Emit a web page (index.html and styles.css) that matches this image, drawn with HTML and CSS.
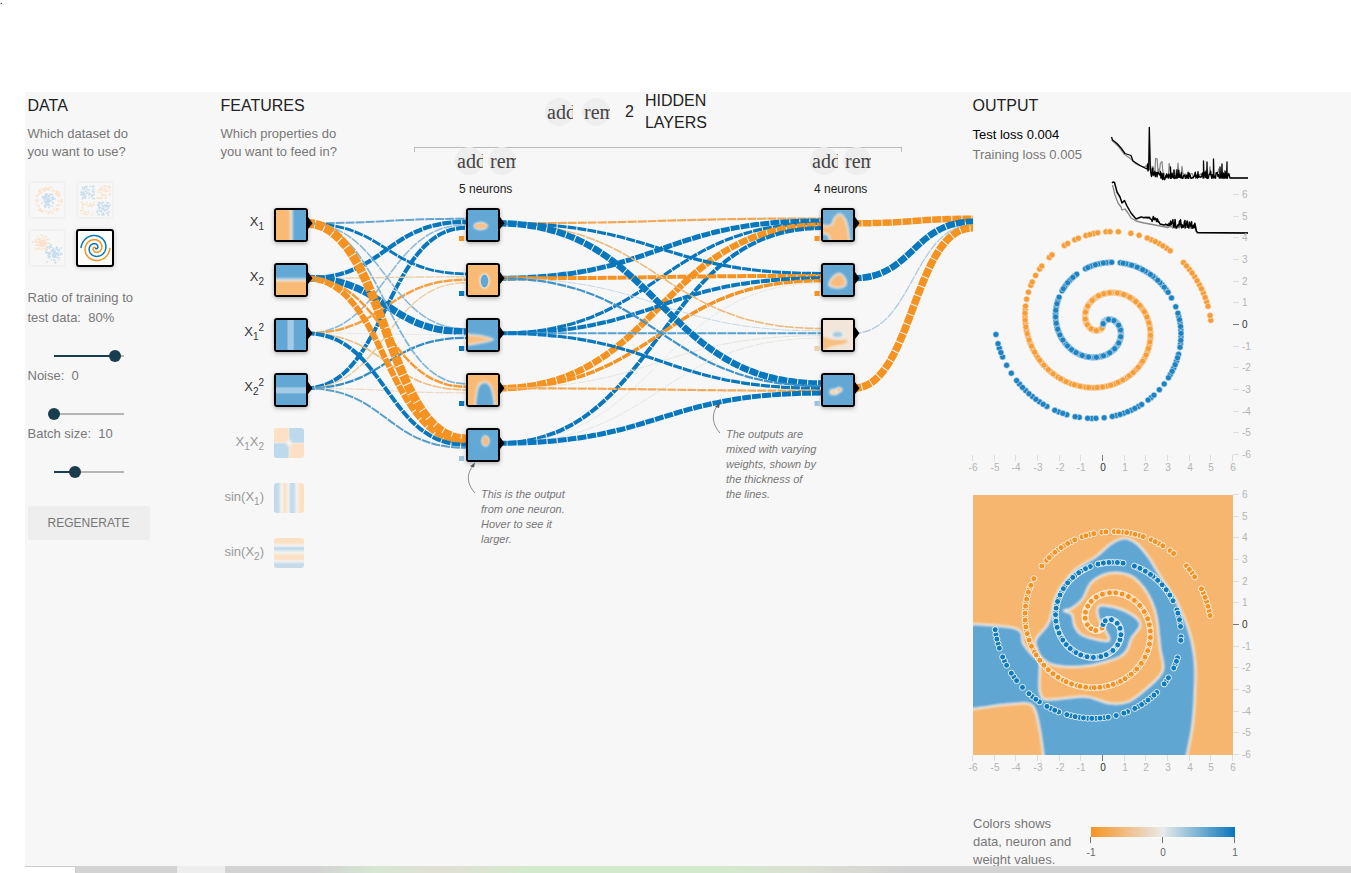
FILE: index.html
```html
<!DOCTYPE html>
<html lang="en">
<head>
<meta charset="utf-8">
<title>Neural Network Playground</title>
<link rel="stylesheet" href="styles.css">
</head>
<body>
<div class="top-space">.</div>
<main class="playground">
  <section class="data">
    <h2>DATA</h2>
    <p class="lead">Which dataset do<br>you want to use?</p>
    <div class="datasets">
      <svg class="dataset" id="set-circle" viewBox="0 0 34 34"></svg>
      <svg class="dataset" id="set-xor" viewBox="0 0 34 34"></svg>
      <svg class="dataset" id="set-gauss" viewBox="0 0 34 34"></svg>
      <svg class="dataset selected" id="set-spiral" viewBox="0 0 34 34"></svg>
    </div>
    <div class="control"><label>Ratio of training to<br>test data:&nbsp; 80%</label>
      <div class="slider"><i class="fill" style="width:61px"></i><i class="knob" style="left:55px"></i></div></div>
    <div class="control"><label>Noise:&nbsp; 0</label>
      <div class="slider"><i class="fill" style="width:0"></i><i class="knob" style="left:-6px"></i></div></div>
    <div class="control"><label>Batch size:&nbsp; 10</label>
      <div class="slider"><i class="fill" style="width:21px"></i><i class="knob" style="left:15px"></i></div></div>
    <button class="regenerate">REGENERATE</button>
  </section>

  <section class="network">
    <div class="features">
      <h2>FEATURES</h2>
      <p class="lead">Which properties do<br>you want to feed in?</p>
    </div>
    <div class="hidden">
      <div class="layers-head">
        <span class="round"><i>add</i></span><span class="round second"><i>remove</i></span>
        <span class="count">2</span><span class="layers-title">HIDDEN<br>LAYERS</span>
      </div>
      <div class="bracket"></div>
    </div>
    <svg class="diagram" id="diagram" viewBox="221 92 752 774"></svg>
    <div class="neurons first">
      <div><span class="round"><i>add</i></span><span class="round"><i>remove</i></span></div>
      <p>5 neurons</p>
    </div>
    <div class="neurons last">
      <div><span class="round"><i>add</i></span><span class="round"><i>remove</i></span></div>
      <p>4 neurons</p>
    </div>
    <p class="callout one">This is the output<br>from one neuron.<br>Hover to see it<br>larger.</p>
    <p class="callout two">The outputs are<br>mixed with varying<br>weights, shown by<br>the thickness of<br>the lines.</p>
  </section>

  <section class="output">
    <div class="stats">
      <div>
        <h2>OUTPUT</h2>
        <p class="loss test">Test loss 0.004</p>
        <p class="loss">Training loss 0.005</p>
      </div>
      <svg class="curves" id="curves" viewBox="1111 120 140 120"></svg>
    </div>
    <svg class="plot" id="plot-points" viewBox="965 185 300 300"></svg>
    <svg class="plot" id="plot-heat" viewBox="965 485 300 300"></svg>
    <div class="legend">
      <p>Colors shows<br>data, neuron and<br>weight values.</p>
      <div class="scale">
        <div class="bar"></div>
        <div class="ticks"><i></i><i></i><i></i></div>
        <div class="nums"><span>-1</span><span>0</span><span>1</span></div>
      </div>
    </div>
  </section>
</main>
<footer class="strip"><i class="tab"></i><i class="a"></i><i class="b"></i><i class="c"></i></footer>
<script src="app.js"></script>
</body>
</html>
```
FILE: styles.css
```css
* { box-sizing: border-box; }
body { margin: 0; width: 1351px; height: 873px; overflow: hidden; background: #fff; font-family: "Liberation Sans", Arial, sans-serif; font-size: 13px; color: #777; }
h2 { margin: 0 0 0 -.5px; font-size: 16px; font-weight: 400; line-height: 22px; color: #222; }
p { margin: 0; }
svg { display: block; }
.top-space { height: 92px; font: 10px/2px "Liberation Serif", serif; color: #000; }
.playground { display: grid; grid-template-columns: 193px 752px 1fr; height: 774px; margin-left: 25px; padding-left: 3px; background: #f7f7f7; overflow: hidden; }
.data, .features { padding-top: 3px; }
.lead { margin: 8px 0 0 -.5px; line-height: 18px; }
.datasets { display: grid; grid-template-columns: 38px 38px; gap: 10px; margin: 20px 0 21px; }
.dataset { width: 38px; height: 38px; border: 2px solid #f1f1f1; border-radius: 3px; }
.dataset.selected { border-color: #000; background: #fff; box-shadow: 0 1px 5px rgba(0,0,0,.2); }
.control label { display: block; margin-left: -.5px; line-height: 20px; }
.control { height: 58px; }
.control:nth-of-type(2) { height: 78px; }
.slider { position: relative; width: 70px; height: 2px; margin: 27px 0 0 26px; background: #b5b5b5; }
.fill { display: block; height: 2px; background: #183d4e; }
.knob { position: absolute; top: -5px; width: 12px; height: 12px; border-radius: 50%; background: #183d4e; }
.regenerate { display: block; width: 122px; height: 34px; margin-top: 24px; padding: 0 1px 0 0; border: 0; border-radius: 2px; background: #eee; font: 12px "Liberation Sans", Arial, sans-serif; color: #777; }
.network { position: relative; display: grid; grid-template-columns: 193px 488px; align-items: start; }
.layers-head { display: flex; height: 55px; padding-left: 131px; }
.round { display: block; flex: none; width: 28px; height: 28px; border-radius: 50%; background: #eee; }
.layers-head .round { margin-top: 6px; }
.layers-head .second { margin-left: 9px; }
.round i { display: block; width: 25.5px; height: 28px; margin-left: 2px; overflow: hidden; font: 20px/28px "Liberation Serif", serif; color: #444; }
.count { margin: 9px 0 0 15px; font-size: 16px; line-height: 22px; color: #222; }
.layers-title { margin: -2px 0 0 11px; font-size: 16px; line-height: 22px; color: #222; }
.bracket { height: 5px; border: 1px solid #bbb; border-bottom: 0; }
.diagram { position: absolute; left: 0; top: 0; width: 752px; height: 774px; }
.neurons { position: absolute; top: 55px; color: #222; font-size: 12px; }
.neurons div { display: flex; gap: 5px; }
.neurons p { margin: 7px 0 0 4px; line-height: 14px; }
.neurons.first { left: 234px; }
.neurons.last { left: 589px; }
.callout { position: absolute; font-size: 11px; font-style: italic; line-height: 15px; }
.callout.one { left: 260px; top: 395px; }
.callout.two { left: 505px; top: 335px; }
.output { display: flex; flex-direction: column; }
.stats { display: flex; height: 93px; padding-top: 3px; }
.stats > div { width: 138px; flex: none; }
.loss { line-height: 20px; margin-left: -.5px; white-space: nowrap; }
.loss.test { margin-top: 8px; color: #000; }
.curves { width: 140px; height: 120px; margin-top: 25px; overflow: visible; }
.plot { width: 300px; height: 300px; margin-left: -8px; flex: none; overflow: visible; }
.legend { display: flex; margin-top: 30px; line-height: 18px; }
.legend p { width: 118px; white-space: nowrap; }
.scale { width: 144px; padding-top: 12px; }
.bar { height: 10px; background: linear-gradient(90deg, #f59322, #e8eaeb, #0877bd); }
.ticks { display: flex; justify-content: space-between; width: 145px; margin-left: -1px; }
.ticks i { width: 1px; height: 6px; background: #777; }
.nums { display: flex; justify-content: space-between; width: 154px; margin-left: -5px; font-size: 10px; line-height: 20px; color: #666; }
.nums span { width: 10px; text-align: center; }
.strip { display: flex; height: 7px; margin-left: 25px; }
.tab { width: 51px; border-top: 1px solid #ccc; border-right: 1px solid #ccc; }
.a { width: 101px; background: #d3d3d3; }
.b { width: 48px; background: #eee; }
.c { flex: 1; background: linear-gradient(90deg, #d3d3d3 0, #d3d3d3 90px, #d6e6d2 150px, #e1dfd5 215px, #d3e9cc 300px, #d3e9cc 500px, #dcdfd4 590px, #d3d3d3 680px, #d3d3d3); }
```
FILE: app.js
```js
const ORANGE = '#f59322', BLUE = '#0877bd';
const HEAT_O = '#f9ba75', HEAT_B = '#63a8d5';
const $ = id => document.getElementById(id);
let seed = 7;
const rnd = () => (seed = (seed * 16807) % 2147483647) / 2147483647;
const put = (id, html) => { $(id).innerHTML += html; };

/* Smooth closed curve through a list of points */
function smooth(pts) {
  const n = pts.length, g = i => pts[(i + n) % n];
  let d = `M${pts[0]}`;
  for (let i = 0; i < n; i++) {
    const [a, b, c, e] = [g(i - 1), g(i), g(i + 1), g(i + 2)];
    d += `C${b[0] + (c[0] - a[0]) / 6},${b[1] + (c[1] - a[1]) / 6} ${c[0] - (e[0] - b[0]) / 6},${c[1] - (e[1] - b[1]) / 6} ${c[0]},${c[1]}`;
  }
  return d + 'Z';
}

/* ---- dataset thumbnails ---- */
function thumbs() {
  const dot = (x, y, c) => `<rect x="${x.toFixed(1)}" y="${y.toFixed(1)}" width="1.4" height="1.4" fill="${c}"/>`;
  const po = '#fbe1c8', pb = '#c5dced';
  let s = '';
  for (let i = 0; i < 90; i++) { const a = rnd() * 6.28, r = 10 + rnd() * 4; s += dot(17.3 + r * Math.cos(a), 17 + r * Math.sin(a), po); }
  for (let i = 0; i < 90; i++) { const a = rnd() * 6.28, r = rnd() * 7.5; s += dot(17.3 + r * Math.cos(a), 17 + r * Math.sin(a), pb); }
  put('set-circle', s); s = '';
  for (let i = 0; i < 240; i++) {
    const x = 2 + rnd() * 30, y = 2 + rnd() * 30;
    if (Math.abs(x - 17) < 1.3 || Math.abs(y - 17) < 1.3) continue;
    s += dot(x, y, (x < 17) === (y < 17) ? pb : po);
  }
  put('set-xor', s); s = '';
  const bell = () => (rnd() + rnd() + rnd() - 1.5) * 7.5;
  for (let i = 0; i < 90; i++) s += dot(11.2 + bell(), 11 + bell(), po) + dot(22 + bell(), 21.5 + bell(), pb);
  put('set-gauss', s);
  const line = sign => {
    let d = '';
    for (let i = 0; i <= 120; i++) { const f = i / 120, t = 11 * f, r = 14.5 * f; d += (i ? 'L' : 'M') + (17.5 + sign * r * Math.sin(t)).toFixed(2) + ',' + (17 + sign * r * Math.cos(t)).toFixed(2); }
    return d;
  };
  put('set-spiral', `<path d="${line(-1)}" fill="none" stroke="${ORANGE}" stroke-width="1.5"/><path d="${line(1)}" fill="none" stroke="${BLUE}" stroke-width="1.5"/>`);
}

/* ---- network diagram ---- */
const ROW = [223, 278, 333, 388, 443, 498, 553];
function link(x1, y1, x2, y2, [c, w]) {
  const m = (x1 + x2) / 2;
  return `<path d="M${x1},${y1}C${m},${y1} ${m},${y2} ${x2},${y2}" fill="none" stroke="${c}" stroke-width="${w}" stroke-dasharray="9 1" stroke-dashoffset=".5"/>`;
}
function layer(x1, x2, rows) {
  let s = '';
  rows.forEach((ins, j) => ins.forEach((v, i) => {
    s += link(x1, ROW[i] + .3, x2, ROW[j] + .3 + (i - (ins.length - 1) / 2) / ins.length * 12, v);
  }));
  return s;
}
const B = w => [BLUE, w], O = w => [ORANGE, w];
const first = [
  [['#66a5cf', 2], B(4.2), ['#8ebad8', 1.6], B(4)],
  [B(2.8), ['#ebcfad', 1.4], ['#f2a347', 2.5], ['#edcca2', 1.4]],
  [['#8bb9d8', 1.6], B(7), ['#e6e8e9', 1], ['#368dc5', 2.3]],
  [['#7eb3d5', 1.7], ['#f39b34', 2.5], ['#efbe83', 1.7], ['#ead9c4', 1.2]],
  [O(9), O(6), B(4), ['#599ecb', 2]]
];
const second = [
  [['#f2a856', 2.2], B(5), B(3.2), O(6.5), B(4)],
  [B(3.2), O(4), B(4), O(3.5), ['#e3e4e2', .8]],
  [['#efb97a', 1.6], ['#c8d8e4', 1], ['#58a0cd', 2], ['#e6e4dd', 1], ['#e3e3e0', .9]],
  [B(6.5), ['#3f93c8', 2.2], B(3.2), ['#f2aa5b', 2.2], B(5)]
];
const blob = (cx, cy, rx, ry, c) => `<ellipse cx="${cx}" cy="${cy}" rx="${rx + 1.2}" ry="${ry + 1.2}" fill="#efeae4" filter="url(#soft)"/><ellipse cx="${cx}" cy="${cy}" rx="${rx}" ry="${ry}" fill="${c}" filter="url(#softer)"/>`;
const area = (pts, c) => `<path d="${smooth(pts)}" fill="${c}" stroke="#efeae4" stroke-width="1.6" filter="url(#soft)"/>`;
function node(x, row, base, inner) {
  const y = ROW[row] - 13;
  return `<path d="M${x + 34},${y + 7}L${x + 38.5},${y + 13.3}L${x + 34},${y + 19}Z"/>
  <rect x="${x}" y="${y - 2}" width="34" height="34" rx="3" filter="url(#drop)"/>
  <svg x="${x + 2}" y="${y}" width="30" height="30" viewBox="0 0 30 30"><rect width="30" height="30" fill="${base}"/>${inner}</svg>`;
}
function ramp(id, vertical, stops) {
  return `<linearGradient id="${id}" x1="0" y1="0" x2="${vertical ? 0 : 1}" y2="${vertical ? 1 : 0}">${stops.map(([o, c]) => `<stop offset="${o}" stop-color="${c}"/>`).join('')}</linearGradient>`;
}
function diagram() {
  const po = '#fce0c4', pb = '#bdd9ec', pw = '#f3f2f0', lt = '#a4cbe5';
  let s = `<defs>
  <filter id="soft" x="-40%" y="-40%" width="180%" height="180%"><feGaussianBlur stdDeviation=".8"/></filter>
  <filter id="softer" x="-40%" y="-40%" width="180%" height="180%"><feGaussianBlur stdDeviation=".6"/></filter>
  <filter id="drop" x="-40%" y="-40%" width="180%" height="180%"><feDropShadow dx="0" dy="1.5" stdDeviation="2" flood-opacity=".3"/></filter>
  ${ramp('gx1', 0, [[.4, HEAT_O], [.5, '#f5d9b8'], [.53, '#bcd6e6'], [.62, HEAT_B]])}
  ${ramp('gx2', 1, [[.38, HEAT_B], [.5, '#d2dde2'], [.53, '#f5d9b8'], [.6, HEAT_O]])}
  ${ramp('gq1', 0, [[.36, HEAT_B], [.41, lt], [.57, lt], [.62, HEAT_B]])}
  ${ramp('gq2', 1, [[.38, HEAT_B], [.44, lt], [.58, lt], [.64, HEAT_B]])}
  ${ramp('gs1', 0, [[0, pb], [.14, '#c6dcea'], [.25, pw], [.36, po], [.48, pw], [.55, '#cadfec'], [.63, pb], [.76, pw], [.88, po]])}
  ${ramp('gs2', 1, [[0, po], [.15, po], [.25, pw], [.35, pb], [.48, pw], [.6, po], [.7, po], [.77, pw], [.87, '#c6dcea'], [1, '#c6dcea']])}
  </defs>`;
  s += layer(306, 466, first) + layer(498, 821, second) + layer(853, 973, [[O(6.5), B(6.5), ['#aecbdf', 1.3], O(7.5)]]);

  const fill = id => `<rect width="30" height="30" fill="url(#${id})"/>`;
  ['gx1', 'gx2', 'gq1', 'gq2'].forEach((g, i) => { s += node(274, i, HEAT_B, fill(g)); });
  s += `<svg x="274" y="428" width="30" height="30"><rect width="30" height="30" rx="3" fill="${po}"/><path d="M15,0H27a3,3 0 0 1 3,3V15H15ZM0,15H15V30H3a3,3 0 0 1-3-3Z" fill="${pb}"/><path d="M15,0V30M0,15H30" stroke="${pw}" stroke-width="1" opacity=".6"/><circle cx="15" cy="15" r="3" fill="${pw}" filter="url(#soft)"/></svg>
  <rect x="274" y="483" width="30" height="30" rx="3" fill="url(#gs1)"/><rect x="274" y="538" width="30" height="30" rx="3" fill="url(#gs2)"/>`;

  s += node(466, 0, HEAT_B, blob(12.7, 16, 6, 2.8, '#fbc189'));
  s += node(466, 1, HEAT_O, blob(16.5, 16, 3.8, 6.5, HEAT_B));
  s += node(466, 2, HEAT_B, area([[-4, 14], [4, 15], [14, 16], [25, 19.5], [14, 22.5], [-4, 24.5]], '#f9be7f'));
  s += node(466, 3, HEAT_O, area([[8.500, 33], [8.500, 18], [11, 10], [17, 7], [22, 10], [25, 18], [25.500, 33]], HEAT_B));
  s += node(466, 4, HEAT_B, blob(17.5, 11, 2.8, 4.5, '#f9be7f'));
  s += node(821, 0, '#6fadd6', area([[-3, 15], [4, 16], [9, 14], [11.5, 8], [17, 4], [22, 9], [25, 18], [26, 27], [26, 33], [9, 33], [5, 25], [-3, 22]], '#f8bd7c'));
  s += node(821, 1, HEAT_B, area([[6, 19], [10, 12], [16, 8.5], [21, 12], [23, 19], [18, 22.5], [9, 22]], '#f8bd7c'));
  s += node(821, 2, '#f2e6da', `<path d="M-3,15C3,19 10,20 16,20S25,20 25,21.5S16,25 10,26S2,31-3,32Z" fill="#f7be80" filter="url(#soft)"/><ellipse cx="14" cy="14.5" rx="8" ry="4" fill="#f3efea" filter="url(#soft)"/><ellipse cx="14.5" cy="14.5" rx="5" ry="2.8" fill="#a4c9e1" filter="url(#soft)"/>`);
  s += node(821, 3, HEAT_B, blob(11, 17, 3.600, 2, '#f5d5b0') + blob(16, 14.8, 2.2, 1.7, '#f8c893'));

  [[459, 0, ORANGE], [459, 1, BLUE], [459, 2, BLUE], [459, 3, BLUE], [459, 4, '#9cc2dc'],
   [814.5, 0, ORANGE], [814.5, 1, ORANGE], [814.5, 2, '#ecd0ae'], [814.5, 3, '#9cc2dc']]
    .forEach(([x, r, c]) => { s += `<rect x="${x}" y="${ROW[r] + 13}" width="5.2" height="5" fill="${c}"/>`; });

  const sub = t => `<tspan font-size="10" dy="4">${t}</tspan>`, sup = (t, d) => `<tspan font-size="10" dy="${d}">${t}</tspan>`;
  const label = (r, html, off) => `<text x="264" y="${ROW[r] + 3}" text-anchor="end" font-size="13" fill="${off ? '#999' : '#333'}">${html}</text>`;
  s += label(0, 'X' + sub(1)) + label(1, 'X' + sub(2)) + label(2, 'X' + sub(1) + sup(2, -9)) + label(3, 'X' + sub(2) + sup(2, -9));
  s += label(4, 'X' + sub(1) + '<tspan dy="-4">X</tspan>' + sub(2), 1);
  s += label(5, 'sin(X' + sub(1) + '<tspan dy="-4">)</tspan>', 1) + label(6, 'sin(X' + sub(2) + '<tspan dy="-4">)</tspan>', 1);

  s += `<g fill="none" stroke="#888"><path d="M475,493C466,483 467,473 473,466M720,433C711,423 712,412 718,405"/></g>
  <path fill="#555" d="M475,462.5l-5,3.7l4,1.4zM720,403l-5,3.7l4,1.4z"/>`;
  put('diagram', s);
}

/* ---- loss curves ---- */
function curves() {
  const line = (pts, c, w) => `<polyline fill="none" stroke="${c}" stroke-width="${w}" stroke-linejoin="round" points="${pts.map(p => p.join(',')).join(' ')}"/>`;
  const noisy = (pts, x0, x1, base, amp, up) => { for (let x = x0; x < x1; x += .55) pts.push([x, base(x) - (up ? rnd() * rnd() : rnd() - .5) * amp]); };
  let g = [[1111.7, 140], [1118, 146], [1124, 154], [1131, 159], [1136, 164], [1143, 167]];
  noisy(g, 1148, 1154, () => 170, 7, 1);
  for (let x = 1154; x < 1229; x += .8) g.push([x, 177 - ((x < 1164 && rnd() > .4) ? 5 + rnd() * 14 : (x > 1168 && x < 1180 && rnd() > .5) ? rnd() * 17 : rnd() > .88 ? rnd() * 11 : rnd() * 4)]);
  g.push([1230, 178], [1248, 178]);
  let k = [[1111.5, 137], [1112.5, 140], [1117, 143.5], [1121, 148], [1125, 153.5], [1131, 155.5], [1133, 161], [1140, 165.5], [1145, 168], [1147, 169], [1147.5, 164], [1148, 171]];
  k.push([1148.7, 168], [1149.3, 127.3], [1149.9, 149], [1150.4, 170]);
  noisy(k, 1151, 1165, x => 172 + (x - 1151) * .3, 9);
  noisy(k, 1165, 1229, () => 178.5, 9, 1);
  [[1170.5, 167], [1174, 170], [1177, 170], [1203.5, 161], [1207, 162], [1213.5, 159], [1220, 167], [1222, 164], [1225, 171], [1227, 162]].forEach(([x, y]) => k.push([x - .5, 178], [x, y], [x + .5, 178]));
  k.sort((a, b) => a[0] - b[0]);
  k.push([1230, 178], [1248, 178]);
  let g2 = [[1112.5, 185], [1115, 195], [1118, 203], [1121, 207], [1122, 210], [1125, 209], [1128, 213], [1131, 218], [1136, 221], [1144, 223], [1155, 225], [1165, 227]];
  noisy(g2, 1166, 1195, () => 227, 2.5); g2.push([1197, 233], [1248, 233]);
  let k2 = [[1112, 183], [1113, 182], [1114.5, 182.5], [1117, 192], [1120, 197], [1122, 203], [1124.5, 200.5], [1127, 206], [1131, 213], [1136, 219], [1141, 217]];
  noisy(k2, 1142, 1150, () => 217.5, 1); noisy(k2, 1150, 1159, () => 219, 6);
  k2.push([1160, 224], [1164, 225]); noisy(k2, 1165, 1169, () => 225, 2); noisy(k2, 1169, 1195.5, () => 224, 9);
  k2.push([1196.5, 231.5], [1198, 232.5], [1248, 233]);
  put('curves', line(g, '#888', 1.2) + line(k, '#000', 1.3) + line(g2, '#888', 1.3) + line(k2, '#000', 1.5));
}

/* ---- output plots ---- */
const range = (a, b) => Array.from({ length: b - a + 1 }, (_, i) => a + i);
/* outer: indices counted back from the end of the arm; skip: absent indices on the inner part.
   Dots that keep a minimum distance are drawn last, over their neighbours. */
function arm(cy, sign, outer, from, skip, c, stroke, sw) {
  const keep = new Set(outer.map(k => 250 - k));
  let under = '', over = '', last = null, gap = 6;
  for (let i = 249; i > 0; i--) {
    if (i > 250 - from ? !keep.has(i) : skip.includes(i)) continue;
    const t = 3.5 * Math.PI * i / 250, r = 5 * i / 250 * 21.67;
    const x = 1103 + sign * r * Math.sin(t), y = cy - sign * r * Math.cos(t);
    const dot = `<circle cx="${x.toFixed(2)}" cy="${y.toFixed(2)}" r="3" fill="${c}" stroke="${stroke}" stroke-width="${sw}"/>`;
    if (!last || Math.hypot(x - last[0], y - last[1]) >= gap) {
      over += dot; last = [x, y]; gap = 4.6 + rnd() * 2.2;
    } else under += dot;
  }
  return under + over;
}
function axes(top) {
  let s = '';
  for (let v = -6; v <= 6; v++) {
    const x = Math.round(1103 + v * 21.67) - .5, y = Math.round(top + 130 - v * 21.67) - .5;
    const tc = v ? '#ddd' : '#777', lc = v ? '#b4b4b4' : '#333';
    s += `<path d="M${x},${top + 260}v6M1233,${y}h6" stroke="${tc}"/>
    <text x="${x + .5}" y="${top + 276}" text-anchor="middle" font-size="10" fill="${lc}">${v}</text>
    <text x="1242" y="${y + 3.7}" font-size="10" fill="${lc}">${v}</text>`;
  }
  return s;
}
function plots() {
  put('plot-points', axes(195) +
    arm(325, -1, [1, 2, ...range(4, 15), ...range(19, 25), 27, 29, 32, 34, 35, ...range(37, 40), 42, 43, 45, 46, 50, 51, 54, 55, 57, 59, 60, 62, 64, 66, 67, 68], 68, [], '#f79d37', '#f9e6d0', .6) +
    arm(325, 1, [2, 4, 5, 6, 7, 9, 11, 13, 14, 15, 16, 17, 18, 19, 20, 21, 22, 24, 25, 26, 27, 29, 30, 32, 33, 34, 36, ...range(38, 46), 48, 49, 50, 52, 54, ...range(56, 63), 65, 66, 67, 68], 68, [174, 172, 171, 169, 147, 148, 133, 134, 135, 121, 122], '#1d82c2', '#d3e6f1', .6));
  const outline = [[-200, 414], [-60, 416], [0, 417], [50, 418], [100, 421], [160, 428], [184, 442], [189, 473], [213, 506], [238, 530], [239, 570], [239, 615], [252, 642], [300, 641], [380, 635], [450, 655], [505, 650], [560, 610], [608, 557], [600, 490], [590, 400], [575, 350], [550, 307], [515, 274], [470, 263], [430, 270], [392, 295], [368, 342], [336, 370], [312, 377], [336, 388], [343, 420], [362, 447], [400, 461], [446, 467], [438, 440], [420, 410], [412, 385], [416, 364], [440, 362], [490, 375], [533, 402], [540, 425], [515, 460], [502, 494], [480, 516], [440, 530], [390, 542], [330, 546], [280, 540], [246, 520], [230, 490], [228, 462], [262, 420], [275, 385], [283, 345], [300, 310], [345, 255], [410, 213], [450, 178], [492, 160], [530, 175], [565, 215], [600, 272], [650, 350], [688, 440], [705, 530], [705, 620], [698, 720], [680, 815], [670, 850], [660, 900], [260, 900], [255, 850], [250, 810], [240, 740], [226, 678], [205, 656], [150, 658], [90, 665], [30, 673], [-60, 682], [-200, 695]];
  put('plot-heat', `<defs><filter id="haze"><feGaussianBlur stdDeviation="3"/></filter></defs>
  <svg x="973" y="495" width="260" height="260" viewBox="39 30 780 780"><rect x="39" y="30" width="780" height="780" fill="#f6b66f"/>
  <path d="${smooth(outline)}" fill="#61a6d3" stroke="#f1eee9" stroke-width="6" filter="url(#haze)"/></svg>` + axes(495) +
    arm(625, -1, [...range(2, 8), 11, 12, 13, 14, 18, 19, ...range(21, 24), ...range(26, 33), 35, 36, ...range(38, 41), ...range(43, 52), 54, 58, ...range(60, 68)], 68, [], '#f59322', '#fbf1e6', 1) +
    arm(625, 1, [1, 2, 3, 4, 5, 7, 8, 9, 11, 12, 13, 15, 17, 18, 19, 20, 22, 23, 24, 25, ...range(27, 37), 39, 41, 42, ...range(44, 51), 54, 55, 56, ...range(59, 62), 67, 68, 71, 72, 73, 74, 75, 76, 79, 80], 80, [151, 152, 153, 140, 139], '#0f7bbf', '#e6f0f6', 1));
}
thumbs(); diagram(); curves(); plots();
```
